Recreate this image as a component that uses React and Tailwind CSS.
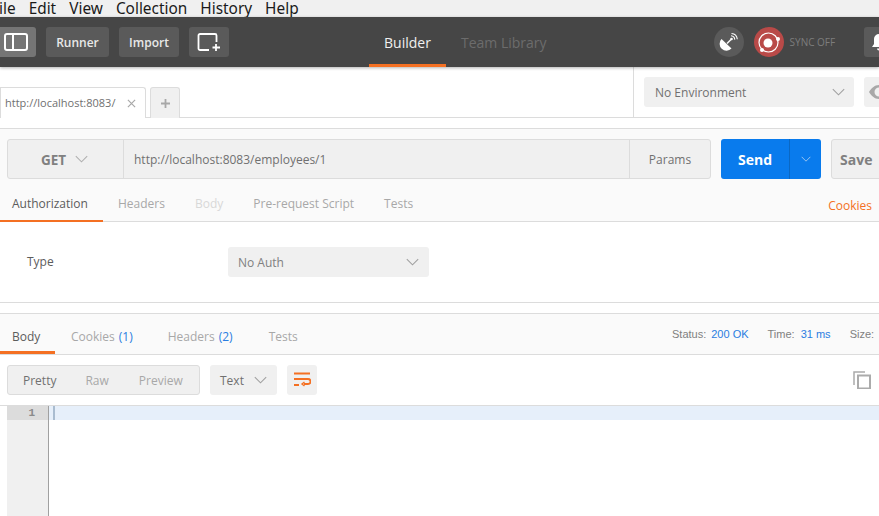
import React from 'react';

const Chevron = ({ className = 'w-[16px] h-[9px]', stroke = '#a0a0a0' }) => (
  <svg viewBox="0 0 16 9" className={className} fill="none" stroke={stroke} strokeWidth="1.3">
    <path d="M1 1l7 7 7-7" />
  </svg>
);

const MenuBar = () => (
  <div className="h-[17px] shrink-0 bg-[#f0f0f0] flex items-center overflow-hidden font-['Noto_Sans',sans-serif] text-[15.4px] leading-[17px] text-[#1a1a1a]">
    <div className="flex gap-[13px] ml-[-9px] whitespace-nowrap pb-[1px]">
      <span>File</span>
      <span>Edit</span>
      <span>View</span>
      <span>Collection</span>
      <span>History</span>
      <span>Help</span>
    </div>
  </div>
);

const Header = () => (
  <div className="relative h-[50px] shrink-0 bg-[#464646] flex items-center shadow-[0_1px_3px_rgba(0,0,0,0.3)] text-[12px] font-semibold text-[#e8e8e8]">
    <div className="w-[50px] h-[30px] ml-[-14px] shrink-0 bg-[#757575] rounded-[3px] flex items-center justify-end pr-[8px]">
      <svg viewBox="0 0 24 18" className="w-[24px] h-[18px]" fill="none" stroke="#fff" strokeWidth="2">
        <rect x="1" y="1" width="22" height="16" rx="2" />
        <path d="M9 1v16" />
      </svg>
    </div>
    <div className="w-[63px] h-[30px] ml-[10px] shrink-0 bg-[#5a5a5a] rounded-[3px] flex items-center justify-center pt-[2px]">Runner</div>
    <div className="w-[60px] h-[30px] ml-[10px] shrink-0 bg-[#5a5a5a] rounded-[3px] flex items-center justify-center pt-[2px]">Import</div>
    <div className="w-[40px] h-[30px] ml-[10px] shrink-0 bg-[#5a5a5a] rounded-[3px] flex items-center justify-center">
      <svg viewBox="0 0 24 20" className="w-[24px] h-[20px]" fill="none" stroke="#fff" strokeWidth="1.8">
        <path d="M12 18H3a1.5 1.5 0 0 1-1.5-1.5v-13A1.5 1.5 0 0 1 3 2h15a1.5 1.5 0 0 1 1.5 1.5V10" />
        <path d="M19 12v7M15.5 15.5h7.5" />
      </svg>
    </div>
    <div className="w-[77px] h-[50px] ml-[140px] shrink-0 border-b-[3px] border-[#f47023] flex items-center justify-center text-[14px] font-normal text-[#f0f0f0] pt-[3px]">Builder</div>
    <div className="ml-[15px] shrink-0 text-[14px] font-normal text-[#6c6c6c] whitespace-nowrap">Team Library</div>
    <div className="w-[30px] h-[30px] ml-[167px] shrink-0 rounded-full bg-[#5a5a5a] flex items-center justify-center">
      <svg viewBox="0 0 20 20" className="w-[20px] h-[20px]" fill="#fff">
        <path d="M2.5 7l10 9.5a6.8 6.8 0 0 1-10-9.5z" />
        <path d="M8 11.5l4-4" stroke="#fff" strokeWidth="1.5" />
        <circle cx="12.5" cy="7" r="1.3" />
        <path d="M12 3.8a4.2 4.2 0 0 1 3.8 3.8M12.5 1.5a6.5 6.5 0 0 1 5.8 5.8" fill="none" stroke="#fff" strokeWidth="1.1" />
      </svg>
    </div>
    <div className="w-[30px] h-[30px] ml-[10px] shrink-0 rounded-full bg-[#b94a48] flex items-center justify-center">
      <svg viewBox="0 0 30 30" className="w-[30px] h-[30px]">
        <circle cx="14.5" cy="15.5" r="9.5" fill="none" stroke="#fff" strokeWidth="1.2" />
        <circle cx="14" cy="16" r="4.5" fill="#fff" />
        <circle cx="24" cy="12" r="2" fill="#fff" />
        <circle cx="8" cy="23" r="2" fill="#fff" />
      </svg>
    </div>
    <div className="ml-[6px] shrink-0 text-[10px] font-normal text-[#7d7d7d] whitespace-nowrap">SYNC OFF</div>
    <div className="w-[40px] h-[30px] ml-[29px] shrink-0 bg-[#5a5a5a] rounded-[3px] flex items-center pl-[7px]">
      <svg viewBox="0 0 16 18" className="w-[16px] h-[18px]" fill="#fff">
        <path d="M8 1a5 5 0 0 1 5 5v5l2 3H1l2-3V6a5 5 0 0 1 5-5zM6 15.5h4a2 2 0 0 1-4 0z" />
      </svg>
    </div>
  </div>
);

const TabRow = () => (
  <div className="h-[51px] shrink-0 bg-white flex border-b border-[#dcdcdc] text-[12px] text-[#707070]">
    <div className="flex items-end w-[633px] shrink-0 mb-[-1px]">
      <div className="w-[146px] h-[31px] shrink-0 bg-white border border-b-0 border-[#dcdcdc] rounded-tr-[3px] flex items-center pl-[4px] pr-[9px] justify-between relative z-10">
        <span className="text-[11px] whitespace-nowrap">http://localhost:8083/</span>
        <svg viewBox="0 0 10 10" className="w-[9px] h-[9px]" stroke="#a8a8a8" strokeWidth="1.3">
          <path d="M1 1l8 8M9 1l-8 8" />
        </svg>
      </div>
      <div className="w-[30px] h-[31px] ml-[4px] shrink-0 bg-[#f0f0f0] border border-b-0 border-[#dcdcdc] rounded-t-[3px] flex items-center justify-center">
        <svg viewBox="0 0 10 10" className="w-[9px] h-[9px]" stroke="#a8a8a8" strokeWidth="2">
          <path d="M5 0v10M0 5h10" />
        </svg>
      </div>
      <div className="flex-1 border-b border-[#dcdcdc]" />
    </div>
    <div className="flex-1 border-l border-[#dcdcdc] flex items-start pt-[10px] pl-[10px] overflow-hidden">
      <div className="w-[210px] h-[30px] shrink-0 bg-[#f0f0f0] rounded-[3px] flex items-center justify-between pl-[11px] pr-[9px] text-[12px] text-[#707070]">
        <span className="pt-[2px]">No Environment</span>
        <Chevron className="w-[13px] h-[8px]" />
      </div>
      <div className="w-[40px] h-[30px] ml-[10px] shrink-0 bg-[#f0f0f0] rounded-[3px] flex items-center pl-[5px]">
        <svg viewBox="0 0 20 14" className="w-[20px] h-[14px]" fill="#a8a8a8">
          <path d="M10 0C5.5 0 2 3.5 0 7c2 3.5 5.5 7 10 7s8-3.5 10-7c-2-3.5-5.5-7-10-7zm0 11.5a4.5 4.5 0 1 1 0-9 4.5 4.5 0 0 1 0 9z" />
        </svg>
      </div>
    </div>
  </div>
);

const RequestSection = () => (
  <div className="mt-[10px] bg-[#fafafa] border-t border-[#dcdcdc] border-b shrink-0 h-[94px] pt-[10px]">
    <div className="flex pl-[7px]">
      <div className="w-[704px] h-[40px] shrink-0 flex bg-[#f0f0f0] border border-[#dcdcdc] rounded-[3px]">
        <div className="w-[116px] shrink-0 border-r border-[#dcdcdc] flex items-center pl-[33px] gap-[9px]">
          <span className="text-[13.5px] font-bold text-[#808080] pt-[2px]">GET</span>
          <Chevron className="w-[13px] h-[8px]" stroke="#b0b0b0" />
        </div>
        <div className="flex-1 flex items-center pl-[10px] pt-[2px] text-[12px] text-[#707070]">http://localhost:8083/employees/1</div>
        <div className="w-[81px] shrink-0 border-l border-[#dcdcdc] flex items-center justify-center pt-[2px] text-[12px] text-[#707070]">Params</div>
      </div>
      <div className="w-[100px] h-[40px] ml-[10px] shrink-0 flex bg-[#097bed] rounded-[3px] text-white">
        <div className="w-[69px] border-r border-[#0a68c4] flex items-center justify-center text-[14px] font-bold">Send</div>
        <div className="flex-1 flex items-center justify-center">
          <Chevron className="w-[10px] h-[6px]" stroke="#b8d4f0" />
        </div>
      </div>
      <div className="w-[70px] h-[40px] ml-[10px] shrink-0 bg-[#f0f0f0] border border-[#dcdcdc] rounded-[3px] flex items-center pl-[8px] text-[14px] font-bold text-[#808080]">Save</div>
    </div>
    <div className="flex items-end h-[33px] mt-[11px] text-[12px] text-[#a8a8a8]">
      <div className="w-[103px] h-[32px] pl-[12px] pb-[4px] border-b-[3px] border-[#f47023] text-[#5c5c5c] flex items-center shrink-0">Authorization</div>
      <div className="h-[32px] pl-[15px] flex items-center pb-[7px]">Headers</div>
      <div className="h-[32px] pl-[30px] flex items-center pb-[7px] text-[#d8d8d8]">Body</div>
      <div className="h-[32px] pl-[30px] flex items-center pb-[7px]">Pre-request Script</div>
      <div className="h-[32px] pl-[30px] flex items-center pb-[7px]">Tests</div>
      <div className="h-[32px] ml-auto mr-[7px] flex items-center pb-[3px] text-[#f47023]">Cookies</div>
    </div>
  </div>
);

const AuthSection = () => (
  <div className="h-[81px] shrink-0 bg-white flex items-start pt-[25px] border-b border-[#dcdcdc] text-[12px]">
    <div className="w-[228px] pl-[27px] h-[30px] flex items-center text-[#5c5c5c] shrink-0">Type</div>
    <div className="w-[201px] h-[30px] shrink-0 bg-[#f0f0f0] rounded-[3px] flex items-center justify-between pl-[10px] pr-[10px] text-[#808080]">
      <span className="pt-[2px]">No Auth</span>
      <Chevron className="w-[13px] h-[8px]" />
    </div>
  </div>
);

const ResponseTabs = () => (
  <div className="mt-[10px] h-[42px] shrink-0 bg-[#fafafa] border-t border-b border-[#dcdcdc] flex items-end text-[12px] text-[#a8a8a8]">
    <div className="w-[55px] h-[40px] pl-[12px] pt-[9px] border-b-[3px] border-[#f47023] text-[#5c5c5c] flex items-center shrink-0">Body</div>
    <div className="h-[40px] pl-[16px] pt-[6px] flex items-center whitespace-nowrap">Cookies <span className="text-[#2a7de1] ml-[4px]">(1)</span></div>
    <div className="h-[40px] pl-[35px] pt-[6px] flex items-center whitespace-nowrap">Headers <span className="text-[#2a7de1] ml-[4px]">(2)</span></div>
    <div className="h-[40px] pl-[36px] pt-[6px] flex items-center">Tests</div>
    <div className="h-[40px] ml-auto flex items-center font-['Liberation_Sans',sans-serif] text-[11px] text-[#808080] whitespace-nowrap w-[207px] shrink-0">
      <span>Status:</span>
      <span className="text-[#2a7de1] ml-[5px]">200 OK</span>
      <span className="ml-[19px]">Time:</span>
      <span className="text-[#2a7de1] ml-[6px]">31 ms</span>
      <span className="ml-[19px]">Size:</span>
    </div>
  </div>
);

const Toolbar = () => (
  <div className="h-[50px] shrink-0 bg-white flex items-center pl-[7px] text-[12px] pb-[1px]">
    <div className="w-[193px] h-[30px] shrink-0 bg-[#f0f0f0] border border-[#dcdcdc] rounded-[3px] flex items-center pt-[2px] text-[#a8a8a8]">
      <span className="ml-[15px] text-[#707070]">Pretty</span>
      <span className="ml-[29px]">Raw</span>
      <span className="ml-[30px]">Preview</span>
    </div>
    <div className="w-[67px] h-[30px] ml-[10px] shrink-0 bg-[#f0f0f0] rounded-[3px] flex items-center justify-between pl-[10px] pr-[10px] text-[#707070]">
      <span className="pt-[2px]">Text</span>
      <Chevron className="w-[13px] h-[8px]" />
    </div>
    <div className="w-[30px] h-[30px] ml-[10px] shrink-0 bg-[#f0f0f0] rounded-[3px] flex items-center justify-center">
      <svg viewBox="0 0 18 15" className="w-[18px] h-[15px]" fill="none" stroke="#f47023" strokeWidth="1.8">
        <path d="M1 1.5h16M1 7h14a2.5 2.5 0 0 1 0 5h-4M1 13h5" />
        <path d="M11.5 10l-2.5 2 2.5 2" strokeWidth="1.4" />
      </svg>
    </div>
    <svg viewBox="0 0 18 18" className="w-[18px] h-[18px] ml-auto mr-[8px] shrink-0" fill="none" stroke="#ababab" strokeWidth="1.5">
      <path d="M12 1H1v13" />
      <rect x="5" y="4.5" width="12" height="13" strokeWidth="2" />
    </svg>
  </div>
);

const Editor = () => (
  <div className="flex-1 border-t border-[#dcdcdc] bg-white flex pl-[7px] min-h-0">
    <div className="w-[42px] shrink-0 bg-[#f0f0f0] border-r border-[#a0a0a0]">
      <div className="h-[14px] bg-[#dcdcdc] text-right pr-[13px] text-[11px] leading-[14px] font-bold font-['Liberation_Mono',monospace] text-[#8a8a8a]">1</div>
    </div>
    <div className="flex-1">
      <div className="h-[14px] bg-[#e6effa] pl-[4px]">
        <div className="w-[1.5px] h-[14px] bg-[#a9bcd0]" />
      </div>
    </div>
  </div>
);

export default function App() {
  return (
    <div className="w-[879px] h-[516px] overflow-hidden bg-white flex flex-col font-['Open_Sans',sans-serif]">
      <MenuBar />
      <Header />
      <TabRow />
      <RequestSection />
      <AuthSection />
      <ResponseTabs />
      <Toolbar />
      <Editor />
    </div>
  );
}
